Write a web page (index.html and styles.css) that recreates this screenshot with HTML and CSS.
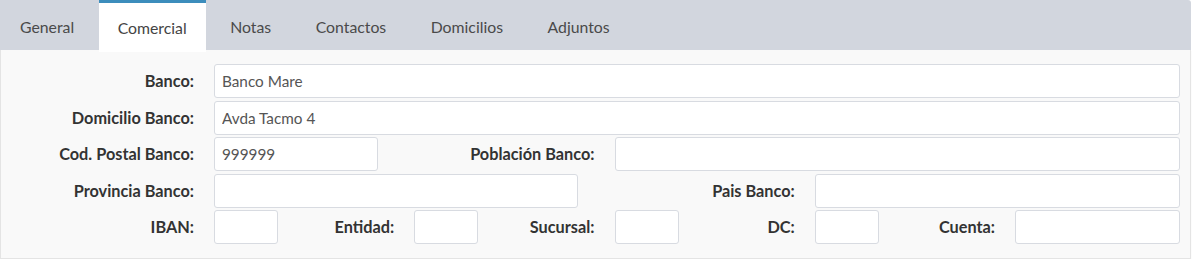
FILE: index.html
```html
<!DOCTYPE html>
<html lang="es">
<head>
<meta charset="utf-8">
<title>Comercial</title>
<link rel="stylesheet" href="styles.css">
</head>
<body>
<div class="tabs-box">
  <ul class="tabs">
    <li class="tab"><a>General</a></li>
    <li class="tab active"><a>Comercial</a></li>
    <li class="tab"><a>Notas</a></li>
    <li class="tab"><a>Contactos</a></li>
    <li class="tab"><a>Domicilios</a></li>
    <li class="tab"><a>Adjuntos</a></li>
  </ul>
  <div class="pane">
    <form class="form">
      <div class="row row-full">
        <label class="lbl">Banco:</label>
        <div class="cell"><input class="ctl" type="text" value="Banco Mare"></div>
      </div>
      <div class="row row-full">
        <label class="lbl">Domicilio Banco:</label>
        <div class="cell"><input class="ctl" type="text" value="Avda Tacmo 4"></div>
      </div>
      <div class="row row-3">
        <label class="lbl">Cod. Postal Banco:</label>
        <div class="cell"><input class="ctl w164" type="text" value="999999"></div>
        <label class="lbl">Población Banco:</label>
        <div class="cell"><input class="ctl" type="text" value=""></div>
      </div>
      <div class="row row-4">
        <label class="lbl">Provincia Banco:</label>
        <div class="cell"><input class="ctl w364" type="text" value=""></div>
        <label class="lbl">Pais Banco:</label>
        <div class="cell"><input class="ctl" type="text" value=""></div>
      </div>
      <div class="row row-5">
        <label class="lbl">IBAN:</label>
        <div class="cell"><input class="ctl" type="text" value=""></div>
        <label class="lbl">Entidad:</label>
        <div class="cell"><input class="ctl" type="text" value=""></div>
        <label class="lbl">Sucursal:</label>
        <div class="cell"><input class="ctl" type="text" value=""></div>
        <label class="lbl">DC:</label>
        <div class="cell"><input class="ctl" type="text" value=""></div>
        <label class="lbl">Cuenta:</label>
        <div class="cell"><input class="ctl" type="text" value=""></div>
      </div>
    </form>
  </div>
</div>
</body>
</html>
```

FILE: styles.css
```css
* { box-sizing: border-box; }

html, body {
  margin: 0;
  padding: 0;
  background: #ffffff;
}

body {
  font-family: Lato, "Open Sans", "Liberation Sans", sans-serif;
  font-size: 14px;
  color: #333;
}

.tabs-box {
  width: 1191px;
}

.tabs {
  display: flex;
  margin: 0;
  padding: 0;
  list-style: none;
  height: 50px;
  background: #d2d6de;
  border-top-right-radius: 3px;
}

.tab {
  margin-right: 4.5px;
}

.tab a {
  display: block;
  height: 50px;
  padding: 3px 20px 0;
  font-size: 15.8px;
  line-height: 47px;
  color: #4a4a4a;
}

.tab.active a {
  background: #ffffff;
  border-top: 3px solid #3c8dbc;
  padding: 0 19px;
  line-height: 50px;
  height: 52px;
  position: relative;
  z-index: 1;
  color: #444;
}

.pane {
  background: #f9f9f9;
  border: 1px solid #e4e4e4;
  border-top: 0;
  box-shadow: 0 1px 1px rgba(0, 0, 0, 0.08);
}

.form {
  display: flex;
  flex-direction: column;
  gap: 2.5px;
  padding: 14px 0 14px;
  margin: 0;
}

.row {
  display: grid;
  align-items: center;
}

.row-full { grid-template-columns: 203px 1fr; }
.row-3 { grid-template-columns: 203px 200.25px 200.25px 1fr; }
.row-4 { grid-template-columns: 203px 400.5px 200.25px 1fr; }
.row-5 { grid-template-columns: 203px 84px 116.25px 84px 116.25px 84px 116.25px 84px 116.25px 1fr; }

.lbl {
  display: block;
  text-align: right;
  font-weight: 700;
  font-size: 16.3px;
  color: #333;
  padding: 0 10px;
  line-height: 34px;
  white-space: nowrap;
}

.cell {
  padding: 0 10px;
}

.ctl {
  display: block;
  width: 100%;
  height: 34px;
  margin: 0;
  padding: 0 7px;
  font-family: inherit;
  font-size: 15.3px;
  color: #555;
  background: #ffffff;
  border: 1px solid #d8dbe1;
  border-radius: 3px;
  outline: none;
}

.ctl.w164 { width: 164px; }
.ctl.w364 { width: 364px; }
```
